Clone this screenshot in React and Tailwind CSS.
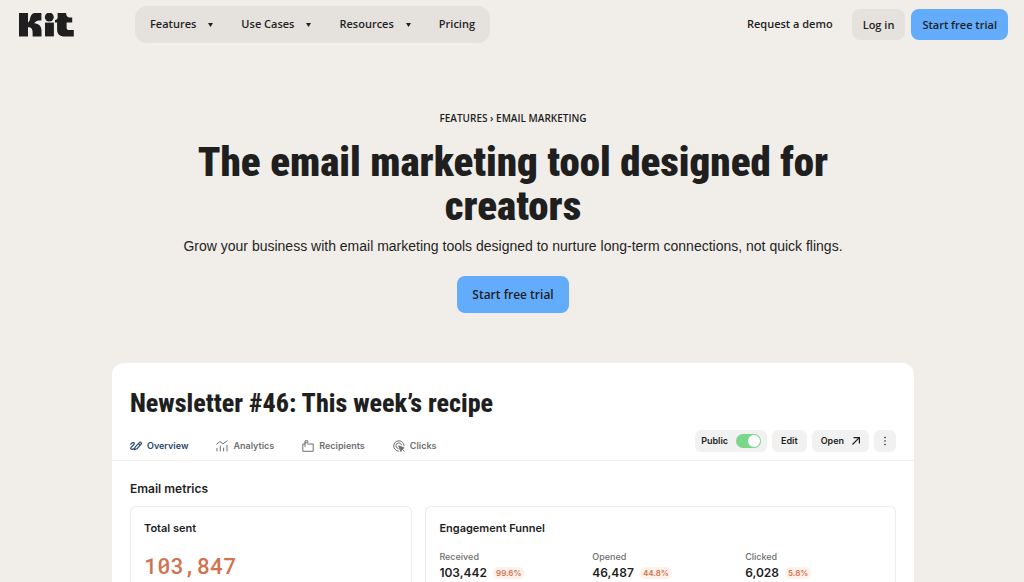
import { useState } from 'react'

const menus = ['Features', 'Use Cases', 'Resources']

const funnel = [
  { label: 'Received', value: '103,442', rate: '99.6%' },
  { label: 'Opened', value: '46,487', rate: '44.8%' },
  { label: 'Clicked', value: '6,028', rate: '5.8%' },
]

function Logo() {
  return (
    <svg className="h-6 w-14" viewBox="0 0 56 24" fill="currentColor" aria-hidden="true">
      <path d="M0 0h9v9.6C10.300 8.700 10.800 7.400 11.100 5.600 11.700 2 13.200 0 17 0h5.400v7.400h-2.300c-2.400 0-3.300.9-4.900 2.900 4.400.5 7.300 2.700 7.300 7.100V23.400h-8.900v-4.300c0-2.800-1.200-4.400-3.200-4.800H9v9.100H0z" />
      <circle cx="30.300" cy="4.100" r="4.500" />
      <path d="M26 9.600h8.900v13.800H26z" />
      <path d="M38.500 0h8.600c0 3 1.200 4.400 3.800 4.400h2.300v5.200h-5.600v4.600c0 2 .8 2.900 2.500 2.900h4.700v6.300h-8.900c-5.300 0-7.800-2.300-7.800-7V9.600H36V7c2-.3 2.700-1.300 2.700-3.500z" />
    </svg>
  )
}

const iconProps = {
  viewBox: '0 0 12 12',
  fill: 'none',
  stroke: 'currentColor',
  strokeWidth: 1,
  strokeLinecap: 'round',
  strokeLinejoin: 'round',
  className: 'size-3',
  'aria-hidden': true,
}

function OverviewIcon() {
  return (
    <svg {...iconProps} strokeWidth={1.2}>
      <path d="M.8 4.200C1.500 2.500 4 2.100 4.400 3.400 4.800 4.700.8 6.600.7 8.300c0 1.500 2.300 1.100 3.700.2" />
      <path d="M4.400 9.700l.7-2.600 4.300-4.500c1.200-1 2.600.5 1.700 1.600L6.900 8.800zM8.400 3.600l1.700 1.700" />
    </svg>
  )
}

function AnalyticsIcon() {
  return (
    <svg {...iconProps}>
      <path d="M1 11V8.500M4.300 11V6M7.600 11V8M11 11V5.500" />
      <path d="M.7 4.200L3.800 1.500l3.300 2.300L11.200.8" />
    </svg>
  )
}

function RecipientsIcon() {
  return (
    <svg {...iconProps}>
      <path d="M3 4H.8v7.300h10.400V4H5.800" />
      <path d="M3 6.500V.8h2.800v2H3" />
    </svg>
  )
}

function ClicksIcon() {
  return (
    <svg {...iconProps}>
      <path d="M5.500 11.200A5.200 5.200 0 1 1 11.100 5.600" />
      <path d="M5.100 8.600A2.900 2.900 0 1 1 8.600 5" />
      <path d="M6 6l5.200 1.900-2.300 1-.9 2.300zM9.200 9.200l2 2" fill="currentColor" />
    </svg>
  )
}

const tabs = [
  { name: 'Overview', icon: OverviewIcon },
  { name: 'Analytics', icon: AnalyticsIcon },
  { name: 'Recipients', icon: RecipientsIcon },
  { name: 'Clicks', icon: ClicksIcon },
]

function Header() {
  return (
    <header className="flex items-center justify-between pt-1.5 pr-4 pl-[19px] text-[11px] font-semibold">
      <div className="flex items-center">
        <a href="#" aria-label="Kit">
          <Logo />
        </a>
        <nav className="ml-[60px] flex h-[37px] items-center gap-7 rounded-xl bg-[#e5e2dd] px-[15px]">
          {menus.map((menu) => (
            <button key={menu} type="button" className="flex items-center gap-3">
              {menu}
              <svg className="h-1 w-[5px]" viewBox="0 0 5 4" fill="currentColor" aria-hidden="true">
                <path d="M0 0h5L2.500 4z" />
              </svg>
            </button>
          ))}
          <a href="#">Pricing</a>
        </nav>
      </div>
      <div className="flex items-center">
        <a href="#" className="mr-[19px]">
          Request a demo
        </a>
        <a href="#" className="mr-1.5 rounded-lg bg-[#e5e2dd] px-[11px] py-2 leading-[15px]">
          Log in
        </a>
        <a href="#" className="rounded-lg bg-[#62acfb] px-[11px] py-2 leading-[15px]">
          Start free trial
        </a>
      </div>
    </header>
  )
}

function Hero() {
  return (
    <section className="flex flex-col items-center px-6 pt-[67px] text-center">
      <p className="text-[10px] leading-4 font-semibold uppercase">
        <a href="#">Features</a> › <a href="#">Email marketing</a>
      </p>
      <h1 className="mt-3.5 max-w-[700px] font-['Roboto_Condensed',sans-serif] text-[41px] leading-[44px] font-black">
        The email marketing tool designed for creators
      </h1>
      <p className="mt-2 font-['Liberation_Sans',sans-serif] text-sm leading-5">
        Grow your business with email marketing tools designed to nurture long-term connections, not quick flings.
      </p>
      <a href="#" className="mt-5 rounded-lg bg-[#62acfb] px-[15px] py-2 text-[12px] leading-[21px] font-semibold">
        Start free trial
      </a>
    </section>
  )
}

function Toolbar() {
  const [isPublic, setIsPublic] = useState(true)

  return (
    <div className="mb-2 flex gap-[5px] text-[9px] font-semibold">
      <label className="flex h-[22px] items-center gap-2 rounded-md bg-[#f1f1f1] px-1.5">
        Public
        <input
          type="checkbox"
          checked={isPublic}
          onChange={(e) => setIsPublic(e.target.checked)}
          className="flex h-3.5 w-[25px] appearance-none items-center rounded-full bg-gray-300 px-px before:size-3 before:rounded-full before:bg-white checked:justify-end checked:bg-[#7bd68b]"
        />
      </label>
      <button type="button" className="h-[22px] rounded-md bg-[#f1f1f1] px-[9px]">
        Edit
      </button>
      <button type="button" className="flex h-[22px] items-center gap-2 rounded-md bg-[#f1f1f1] px-[9px]">
        Open
        <svg className="size-2" viewBox="0 0 8 8" fill="none" stroke="currentColor" strokeWidth="1.2" aria-hidden="true">
          <path d="M.5 7.500L7.300.7M1.500.6h5.900v5.900" />
        </svg>
      </button>
      <button
        type="button"
        aria-label="More"
        className="flex h-[22px] w-[22px] items-center justify-center rounded-md bg-[#f1f1f1]"
      >
        <svg className="h-2.5 w-1" viewBox="0 0 4 10" fill="currentColor" aria-hidden="true">
          <circle cx="2" cy="1.500" r=".8" />
          <circle cx="2" cy="5" r=".8" />
          <circle cx="2" cy="8.500" r=".8" />
        </svg>
      </button>
    </div>
  )
}

function Newsletter() {
  const [active, setActive] = useState('Overview')

  return (
    <section className="mx-auto mt-[50px] max-w-[802px] rounded-t-xl bg-white pt-6 font-[Inter,sans-serif]">
      <h2 className="px-[18px] font-['Roboto_Condensed',sans-serif] text-[26px] leading-8 font-extrabold">
        Newsletter #46: This week’s recipe
      </h2>
      <div className="mt-[11px] flex items-end justify-between border-b border-[#efefef] px-[18px]">
        <div className="flex gap-7 pb-[7px] text-[9px] leading-[15px] font-semibold text-[#707070]">
          {tabs.map(({ name, icon: Icon }) => (
            <button
              key={name}
              type="button"
              onClick={() => setActive(name)}
              className={`flex items-center gap-[5px] ${active === name ? 'text-[#28466b]' : ''}`}
            >
              <Icon />
              {name}
            </button>
          ))}
        </div>
        <Toolbar />
      </div>
      <div className="px-[18px] pt-4">
        <h3 className="text-[12px] leading-6 font-semibold">Email metrics</h3>
        <div className="mt-[5px] grid grid-cols-[3fr_5fr] gap-[13px]">
          <div className="rounded-t-md border border-b-0 border-[#ececec] px-[13px] pt-[11px]">
            <h4 className="text-[11px] leading-5 font-semibold">Total sent</h4>
            <p className="mt-3 font-['Roboto_Mono','Liberation_Mono',monospace] text-[22px] leading-8 font-medium text-[#d07450]">
              103,847
            </p>
          </div>
          <div className="rounded-t-md border border-b-0 border-[#ececec] px-[13px] pt-[11px]">
            <h4 className="text-[11px] leading-5 font-semibold">Engagement Funnel</h4>
            <dl className="mt-3 grid grid-cols-3 gap-4">
              {funnel.map((item) => (
                <div key={item.label}>
                  <dt className="text-[9px] leading-3.5 font-medium text-[#707070]">{item.label}</dt>
                  <dd className="flex items-center gap-1.5 text-[12px] leading-[18px] font-semibold">
                    {item.value}
                    <span className="rounded-full bg-[#fdf1ea] px-[3px] text-[8px] leading-3 text-[#d07450]">
                      {item.rate}
                    </span>
                  </dd>
                </div>
              ))}
            </dl>
          </div>
        </div>
      </div>
    </section>
  )
}

export default function App() {
  return (
    <div className="h-screen overflow-hidden bg-[#f1eee9] font-['Open_Sans',sans-serif] text-[#1f1f1f]">
      <Header />
      <div className="pl-0.5">
        <Hero />
        <Newsletter />
      </div>
    </div>
  )
}
